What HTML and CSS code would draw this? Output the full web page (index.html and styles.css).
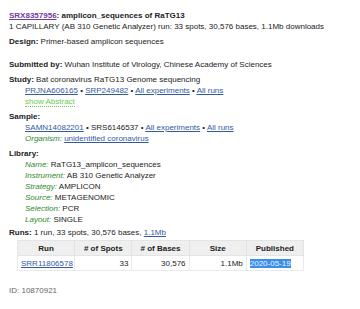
FILE: index.html
```html
<!DOCTYPE html>
<html lang="en">
<head>
    <meta charset="UTF-8">
    <title>SRX8357956</title>
    <link rel="stylesheet" href="styles.css">
</head>
<body>
<div class="report">
    <div class="title"><a href="#" class="visited">SRX8357956</a>: amplicon_sequences of RaTG13</div>
    <div class="line">1 CAPILLARY (AB 310 Genetic Analyzer) run: 33 spots, 30,576 bases, 1.1Mb downloads</div>

    <div class="sec sec-design"><b>Design:</b> Primer-based amplicon sequences</div>

    <div class="sec sec-sub"><b>Submitted by:</b> Wuhan Institute of Virology, Chinese Academy of Sciences</div>

    <div class="sec">
        <div class="line"><b>Study:</b> Bat coronavirus RaTG13 Genome sequencing</div>
        <div class="ind">
            <div class="line"><a href="#">PRJNA606165</a> &bull; <a href="#">SRP249482</a> &bull; <a href="#">All experiments</a> &bull; <a href="#">All runs</a></div>
            <div class="line"><a href="#" class="abstract">show Abstract</a></div>
        </div>
    </div>

    <div class="sec">
        <div class="line"><b>Sample:</b></div>
        <div class="ind">
            <div class="line"><a href="#">SAMN14082201</a> &bull; SRS6146537 &bull; <a href="#">All experiments</a> &bull; <a href="#">All runs</a></div>
            <div class="line"><i class="lbl">Organism:</i> <a href="#">unidentified coronavirus</a></div>
        </div>
    </div>

    <div class="sec sec-lib">
        <div class="line"><b>Library:</b></div>
        <div class="ind lib">
            <div><i class="lbl">Name:</i> RaTG13_amplicon_sequences</div>
            <div><i class="lbl">Instrument:</i> AB 310 Genetic Analyzer</div>
            <div><i class="lbl">Strategy:</i> AMPLICON</div>
            <div><i class="lbl">Source:</i> METAGENOMIC</div>
            <div><i class="lbl">Selection:</i> PCR</div>
            <div><i class="lbl">Layout:</i> SINGLE</div>
        </div>
    </div>

    <div class="sec runs">
        <div class="line"><b>Runs:</b> 1 run, 33 spots, 30,576 bases, <a href="#">1.1Mb</a></div>
        <table>
            <tr>
                <th>Run</th>
                <th># of Spots</th>
                <th># of Bases</th>
                <th>Size</th>
                <th>Published</th>
            </tr>
            <tr>
                <td class="l"><a href="#">SRR11806578</a></td>
                <td>33</td>
                <td>30,576</td>
                <td>1.1Mb</td>
                <td class="l"><span class="sel">2020-05-19</span></td>
            </tr>
        </table>
    </div>

    <div class="uid">ID: 10870921</div>
</div>
</body>
</html>
```

FILE: styles.css
```css
body {
    margin: 0;
    background: #fff;
    font-family: "Liberation Sans", Arial, sans-serif;
    font-size: 8px;
    color: #222;
}

.report {
    padding: 10px 9px 0 9px;
}

a {
    color: #34599e;
}

a.visited {
    color: #6f3b9c;
}

.title {
    font-weight: bold;
    line-height: 11px;
}

.line {
    line-height: 11px;
}

.sec {
    margin-top: 4px;
    line-height: 11px;
}

.sec-design {
    margin-top: 4px;
}

.sec-sub {
    margin-top: 12px;
}

.sec-lib {
    margin-top: 4px;
}

.ind {
    padding-left: 16px;
}

.lib div {
    line-height: 11px;
}

a.abstract {
    color: #5fce4a;
    text-decoration: none;
    border-bottom: 1px dotted #5fce4a;
}

.lbl {
    color: #2e8a2e;
}

.runs {
    margin-top: 2px;
}

table {
    border-collapse: collapse;
    margin-left: 8px;
    margin-top: 2px;
    table-layout: fixed;
    width: 287px;
}

th {
    background: #efefef;
    font-weight: bold;
    padding: 0 4px;
    height: 14px;
    border: 1px solid #e4e4e4;
}

td {
    text-align: right;
    padding: 0 3px;
    height: 14px;
    border: 1px solid #eaeaea;
}

td.l {
    text-align: left;
}

.sel {
    background: #3b8eea;
    color: #eaf2ff;
}

.uid {
    margin-top: 15px;
    color: #666;
}
```
